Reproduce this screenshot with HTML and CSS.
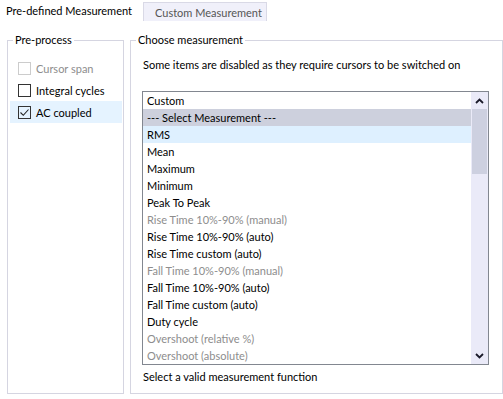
FILE: index.html
```html
<!DOCTYPE html>
<html>
<head>
<meta charset="utf-8">
<link rel="stylesheet" href="styles.css">
</head>
<body>
<div class="tabs">
  <div class="tab active">Pre-defined Measurement</div>
  <div class="tab">Custom Measurement</div>
  <div class="tab-fill"></div>
</div>
<div class="panel">
  <fieldset class="group left">
    <legend>Pre-process</legend>
    <div class="row disabled"><span class="cb"></span>Cursor span</div>
    <div class="row"><span class="cb"></span>Integral cycles</div>
    <div class="row hot"><span class="cb"><svg width="11" height="11" viewBox="0 0 11 11"><path d="M1.5 5.5 L4.3 8.3 L9.5 2.5" fill="none" stroke="#222" stroke-width="1.1"/></svg></span>AC coupled</div>
  </fieldset>
  <fieldset class="group right">
    <legend>Choose measurement</legend>
    <div class="inner">
      <div class="note">Some items are disabled as they require cursors to be switched on</div>
      <div class="listbox">
        <div class="items">
          <div class="item">Custom</div>
          <div class="item sel">--- Select Measurement ---</div>
          <div class="item hover">RMS</div>
          <div class="item">Mean</div>
          <div class="item">Maximum</div>
          <div class="item">Minimum</div>
          <div class="item">Peak To Peak</div>
          <div class="item off">Rise Time 10%-90% (manual)</div>
          <div class="item">Rise Time 10%-90% (auto)</div>
          <div class="item">Rise Time custom (auto)</div>
          <div class="item off">Fall Time 10%-90% (manual)</div>
          <div class="item">Fall Time 10%-90% (auto)</div>
          <div class="item">Fall Time custom (auto)</div>
          <div class="item">Duty cycle</div>
          <div class="item off">Overshoot (relative %)</div>
          <div class="item off">Overshoot (absolute)</div>
        </div>
        <div class="scroll">
          <div class="btn"><svg width="9" height="6" viewBox="0 0 9 6"><path d="M1 5 L4.5 1.5 L8 5" fill="none" stroke="#1a1a2a" stroke-width="1.8"/></svg></div>
          <div class="track"><div class="thumb"></div></div>
          <div class="btn"><svg width="9" height="6" viewBox="0 0 9 6"><path d="M1 1 L4.5 4.5 L8 1" fill="none" stroke="#1a1a2a" stroke-width="1.8"/></svg></div>
        </div>
      </div>
      <div class="status">Select a valid measurement function</div>
    </div>
  </fieldset>
</div>
</body>
</html>
```

FILE: styles.css
```css
html, body {
  margin: 0;
  padding: 0;
  background: #ffffff;
}
body {
  width: 503px;
  height: 399px;
  overflow: hidden;
  font-family: Lato, "Noto Sans", sans-serif;
  font-size: 11px;
  color: #000;
  white-space: nowrap;
}
.tabs {
  display: flex;
  height: 22px;
  align-items: flex-end;
}
.tab {
  box-sizing: border-box;
  height: 19px;
  margin-bottom: 1px;
  padding: 0 0 0 11px;
  line-height: 19px;
  background: #f0f0fa;
  border: 1px solid #d9d9e6;
  border-bottom: none;
  color: #555;
  width: 124px;
}
.tab.active {
  height: 22px;
  margin-bottom: 0;
  width: 143px;
  background: #fff;
  border: none;
  color: #000;
  padding: 0 0 0 6px;
  line-height: 22px;
}
.tab-fill {
  flex: 1;
}
.panel {
  display: flex;
  gap: 6px;
  padding: 10px 0 0 7px;
}
.group {
  box-sizing: border-box;
  margin: 0;
  border: 1px solid #d5d5e1;
  padding: 9px 0 0 0;
  height: 362px;
  min-width: 0;
}
.group legend {
  margin-left: 5px;
  padding: 0 2px;
  line-height: 16px;
}
.left {
  width: 117px;
}
.right {
  width: 373px;
}
.row {
  display: flex;
  align-items: center;
  height: 22px;
  margin: 0 1px 0 2px;
  padding-left: 8px;
}
.row.hot {
  background: #e5f3ff;
}
.row.disabled {
  color: #8d8d8d;
}
.cb {
  box-sizing: border-box;
  width: 13px;
  height: 13px;
  border: 1px solid #333;
  margin-right: 5px;
  display: flex;
  align-items: center;
  justify-content: center;
}
.row.disabled .cb {
  border-color: #cccccc;
}
.inner {
  padding: 0 12px 0 11px;
}
.note {
  line-height: 16px;
  padding-left: 1px;
}
.listbox {
  margin-top: 18px;
  box-sizing: border-box;
  width: 347px;
  height: 274px;
  border: 1px solid #828790;
  display: flex;
}
.items {
  flex: 1;
}
.item {
  height: 17px;
  line-height: 17px;
  padding-left: 4px;
}
.item.sel {
  background: #cdd0dd;
}
.item.hover {
  background: #def0ff;
}
.item.off {
  color: #8d8d8d;
}
.scroll {
  width: 17px;
  display: flex;
  flex-direction: column;
  background: #eaeaf8;
}
.btn {
  height: 17px;
  display: flex;
  align-items: center;
  justify-content: center;
}
.track {
  flex: 1;
}
.thumb {
  height: 65px;
  margin: 0 1px;
  background: #cdd0e0;
}
.status {
  margin-top: 4px;
  line-height: 16px;
  padding-left: 1px;
}
```
